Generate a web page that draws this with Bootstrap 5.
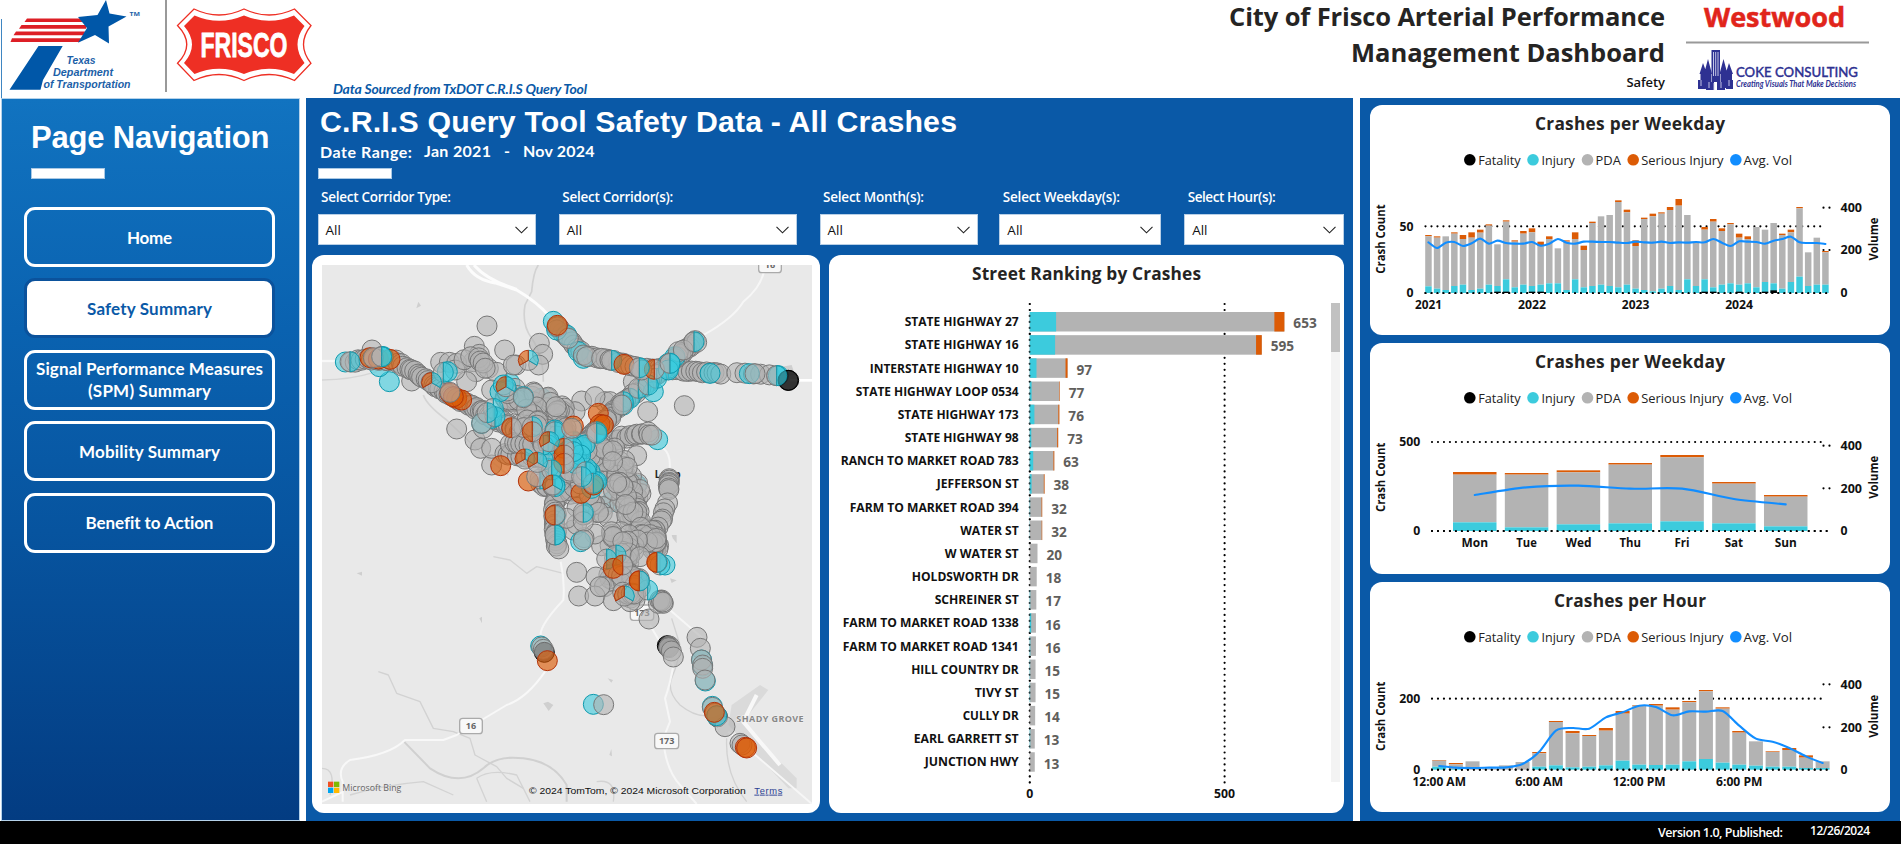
<!DOCTYPE html>
<html lang="en">
<head>
<meta charset="utf-8">
<title>City of Frisco Arterial Performance Management Dashboard</title>
<link href="https://cdn.jsdelivr.net/npm/bootstrap@5.3.0/dist/css/bootstrap.min.css" rel="stylesheet">
<style>
:root{--blue:#0a59a7;--sans:"Open Sans","Noto Sans",sans-serif;--human:Lato,"Open Sans",sans-serif;--arial:"Liberation Sans",Arial,sans-serif}
body{width:1901px;height:844px;overflow:hidden;font-family:var(--sans);background:#fff;color:#000}
svg{display:block}
[data-fit]{display:inline-block;white-space:nowrap}
.topbar{height:98px}
.source-note{width:262px;padding:81px 0 0 13px;font:italic 700 14px/16px var(--human);color:var(--blue)}
.app-title{font:700 25.5px/36px var(--sans);color:#252423;margin-top:-2px}
.app-page{font:600 13px/16px var(--sans);color:#111;padding-top:4px}
.title-block{width:450px;margin-right:21px}
.brands{width:183px;margin-right:32px}
.side{width:299px;margin-left:1px;padding:0 24px 0 22px;background:linear-gradient(#1173c0,#0a62b0 32%,#07549f 60%,#033c82);border:1px solid #b5d2ea}
.side-title{font:700 31px/36px var(--arial);color:#fff;margin:21px 0 0 7px}
.rule-bar{width:74.5px;height:10.5px;background:#fff;border:1px solid #a9c8e4}
.nav-tile{height:60px;border:3px solid #fff;border-radius:11px;color:#fff;font:700 17px/22px var(--human);text-align:center;padding:1px 0 0}
.nav-tile:hover{color:#fff;border-color:#fff;background:#0f6cb9}
.nav-tile.active{background:#fff!important;color:#0a59a7!important;border-color:#0b529c!important}
.main-panel{width:1047px;margin-left:6px;background:var(--blue);padding:0 9px 8px 6px}
.main-title{font:700 30.3px/34px var(--arial);color:#fff}
.date-range{font:700 16px/20px var(--human);color:#fff}
.slicers{padding:0 0 0 5.5px}
.slicer label{font:600 13.5px/18px var(--sans);color:#fff;margin-left:3.5px}
.slicer .box{height:30.5px;background:#fff;border:1px solid #b8cfe6;font:400 13.5px/28px var(--sans);color:#111;padding:1px 7px 0 7px}
.panel-card{background:#fff;border:0;border-radius:12px}
.right-panel{width:540px;margin-left:7px;background:var(--blue);padding:6.6px 10px 8px 10px;gap:8.1px}
.chart-title{font:700 17.3px/24px var(--sans);color:#252423}
.foot{height:23px;background:#000;color:#fff}
.foot div{font-weight:600}
text{font-family:var(--sans)}
.ax{font-weight:700;font-size:12.2px}
</style>
</head>
<body class="d-flex flex-column">
<header class="topbar d-flex flex-shrink-0">
 <svg width="320" height="98" viewBox="0 0 320 98" role="img" aria-label="Texas Department of Transportation and Frisco">
  <path d="M1.5 19V98" stroke="#3f86c2" stroke-width="1"/>
  <g fill="#dd1f26"><path d="M27 18.6H80L84 22H24.500z"/><path d="M21.500 25H87L86 28.700H19z"/><path d="M16 31.600H85L84 35.200H13.500z"/><path d="M12 38.200H82L79 42H10.500z"/></g>
  <path d="M106 0L109.500 13.500L126.500 16.500L108.500 26.500L109 43.500L95 35L78 42.700L87 28L78 17L97.500 15z" fill="#0057a8"/>
  <path d="M38.500 46H62.700L43 80L40.500 89.700H9.500z" fill="#0057a8"/>
  <g fill="#1c5fa8" font-style="italic" font-weight="700" font-size="11.800">
   <text x="66.500" y="64" textLength="29" lengthAdjust="spacingAndGlyphs" style="font-family:var(--arial)">Texas</text>
   <text x="53" y="76" textLength="60" lengthAdjust="spacingAndGlyphs" style="font-family:var(--arial)">Department</text>
   <text x="43.500" y="88" textLength="87" lengthAdjust="spacingAndGlyphs" style="font-family:var(--arial)">of Transportation</text>
  </g>
  <text x="129.500" y="16" font-size="5.500" font-weight="700" fill="#1c5fa8" textLength="10.500" lengthAdjust="spacingAndGlyphs">TM</text>
  <path d="M166 0V92" stroke="#999" stroke-width="2"/>
  <path d="M194 9Q219 21 244 9Q269 21 294.500 9L311 25.500Q296 44.500 311 63.300L294.500 80.500Q269 68.500 244 80.500Q219 68.500 194 80.500L177.500 63.300Q196 44.500 177.500 25.500Z" fill="#fff" stroke="#ee2f24" stroke-width="1.300"/>
  <path d="M194.500 15.500Q219 26 244 15.500Q269 26 294 15.500L304.500 26Q290.500 44.500 304.500 63L294 74Q269 63.500 244 74Q219 63.500 194.500 74L184 63Q200 44.500 184 26Z" fill="#ee2f24"/>
  <text x="200.500" y="57.300" font-size="35.500" font-weight="700" fill="#fff" stroke="#fff" stroke-width=".8" textLength="87" lengthAdjust="spacingAndGlyphs" style="font-family:var(--arial)">FRISCO</text>
 </svg>
 <div class="source-note"><span data-fit="254">Data Sourced from TxDOT C.R.I.S Query Tool</span></div>
 <div class="title-block ms-auto text-end">
  <div class="app-title"><span data-fit="436">City of Frisco Arterial Performance</span><br><span data-fit="314">Management Dashboard</span></div>
  <div class="app-page"><span data-fit="38.500">Safety</span></div>
 </div>
 <svg class="brands" height="98" viewBox="1686 0 183 98" role="img" aria-label="Westwood, Coke Consulting">
  <text x="1704" y="27" font-size="26" font-weight="700" fill="#e1251b" stroke="#e1251b" stroke-width=".5" textLength="141" lengthAdjust="spacingAndGlyphs">Westwood</text>
  <path d="M1686 42.500H1869" stroke="#999" stroke-width="2"/>
  <g fill="#2e3192">
   <rect x="1711.500" y="50" width="8.500" height="32"/>
   <path d="M1703 63l-3.500 11h1v14h5.500V74h1zM1708 59l-4 15h1v14h6V74h1zM1723.500 59l-4 15h1v14h6V74h1zM1729 63l-3.500 11h1v14h5.500V74h1z"/>
   <path d="M1698 80h7l1 9h-8zM1706 82h8v8h-8zM1717 82h8v8h-8zM1726 80h7v9h-7z"/>
   <path d="M1713.500 52v24M1715.700 52v24M1718 52v24M1701 80v6M1709 82v6M1714 83v7M1721 82v6M1729 80v6" stroke="#d5d5ef" stroke-width=".9"/>
   <text x="1736" y="76.500" font-size="13.500" font-weight="500" stroke="#2e3192" stroke-width=".35" textLength="122" lengthAdjust="spacingAndGlyphs" style="font-family:Lato,sans-serif">COKE CONSULTING</text>
   <text x="1736" y="87" font-size="8.500" font-style="italic" font-weight="700" textLength="120" lengthAdjust="spacingAndGlyphs" style="font-family:Lato,sans-serif">Creating Visuals That Make Decisions</text>
  </g>
 </svg>
</header>

<main class="d-flex" style="height:723px">
 <nav class="side d-flex flex-column" aria-label="Page navigation">
  <div class="side-title"><span data-fit="238.500">Page Navigation</span></div>
  <div class="rule-bar" style="margin:12px 0 0 6.500px"></div>
  <div class="d-flex flex-column" style="gap:11.400px;margin-top:28.500px">
   <a class="btn nav-tile d-flex align-items-center justify-content-center"><span data-fit="45">Home</span></a>
   <a class="btn nav-tile active d-flex align-items-center justify-content-center"><span data-fit="125">Safety Summary</span></a>
   <a class="btn nav-tile d-flex align-items-center justify-content-center"><span><span data-fit="227">Signal Performance Measures</span><br><span data-fit="123">(SPM) Summary</span></span></a>
   <a class="btn nav-tile d-flex align-items-center justify-content-center"><span data-fit="141">Mobility Summary</span></a>
   <a class="btn nav-tile d-flex align-items-center justify-content-center"><span data-fit="128">Benefit to Action</span></a>
  </div>
 </nav>

 <section class="main-panel d-flex flex-column">
  <div style="padding:7px 0 0 8px">
   <div class="main-title"><span data-fit="637">C.R.I.S Query Tool Safety Data - All Crashes</span></div>
   <div class="date-range d-flex" style="margin-top:2px"><span data-fit="92" style="margin-top:1px">Date Range:</span><span data-fit="67" style="margin-left:12px">Jan 2021</span><span style="margin-left:13px">-</span><span data-fit="71.500" style="margin-left:13px">Nov 2024</span></div>
  </div>
  <div class="rule-bar flex-shrink-0" style="margin:6px 0 0 5.500px"></div>
  <div class="slicers d-flex" id="slicers" style="margin-top:9.500px"></div>
  <div class="d-flex flex-shrink-0" style="gap:9px;margin-top:10.500px">
   <div class="card panel-card" style="width:508px;height:557.500px;padding:10px 8px 8px 10px">
    <svg id="map" width="490" height="539" viewBox="36 30 1470 1617"></svg>
   </div>
   <div class="card panel-card" style="width:515px;height:557.500px">
    <div class="chart-title text-center" style="padding-top:7px;height:45px"><span data-fit="229">Street Ranking by Crashes</span></div>
    <svg id="street" width="515" height="512" viewBox="829 300 515 512"></svg>
   </div>
  </div>
 </section>

 <section class="right-panel d-flex flex-column" id="right"></section>
</main>
<footer class="foot d-flex flex-shrink-0 justify-content-end" style="padding-right:31px">
 <div style="font-size:12.500px;line-height:23px;margin-right:27px"><span data-fit="125">Version 1.0, Published:</span></div>
 <div style="font-size:12px;line-height:20px"><span data-fit="60">12/26/2024</span></div>
</footer>

<script src="https://cdn.jsdelivr.net/npm/bootstrap@5.3.0/dist/js/bootstrap.bundle.min.js"></script>
<script>
const CY='#3ccbdd',GR='#b3b3b3',OR='#dc5b05',LN='#118dff';
const dots=(d)=>`<path d="${d}" stroke="#000" stroke-width="2.200" stroke-linecap="round" stroke-dasharray="0 5.980" fill="none"/>`;
const rect=(x,y,w,h,f)=>h>0&&w>0?`<rect x="${x}" y="${y}" width="${w}" height="${h}" fill="${f}"/>`:'';
const txt=(x,y,s,w,a='start',c='ax',f='#111')=>`<text class="${c}" x="${x}" y="${y}" text-anchor="${a}" fill="${f}" textLength="${w}" lengthAdjust="spacingAndGlyphs">${s}</text>`;

/* slicers */
const sl=[['Corridor Type',219,22.500,130],['Corridor(s)',238.500,22.500,111],['Month(s)',158.500,21.500,101],['Weekday(s)',162,23,117],['Hour(s)',160,0,88]];
document.getElementById('slicers').innerHTML=sl.map(s=>`<div class="slicer" style="width:${s[1]}px;margin-right:${s[2]}px"><label class="d-block" style="margin-bottom:8px"><span data-fit="${s[3]}">Select ${s[0]}:</span></label><div class="box d-flex justify-content-between align-items-center"><span>All</span><svg width="13" height="8" viewBox="0 0 13 8"><path d="M.5.8L6.500 6.800L12.500.8" fill="none" stroke="#222" stroke-width="1.100"/></svg></div></div>`).join('');

/* street ranking */
const st=[['STATE HIGHWAY 27',653,114,26.400,10],['STATE HIGHWAY 16',595,114,25.400,5.700],['INTERSTATE HIGHWAY 10',97,149,6.800,2],['STATE HIGHWAY LOOP 0534',77,163,1.900,.5],['STATE HIGHWAY 173',76,121,4.700,1],['STATE HIGHWAY 98',73,114,1.600,1],['RANCH TO MARKET ROAD 783',63,178,3.500,.8],['JEFFERSON ST',38,82,1.900,.7],['FARM TO MARKET ROAD 394',32,169,.4,.6],['WATER ST',32,58.500,.2,.5],['W WATER ST',20,74,0,0],['HOLDSWORTH DR',18,107,0,0],['SCHREINER ST',17,84,.5,0],['FARM TO MARKET ROAD 1338',16,176,1.500,0],['FARM TO MARKET ROAD 1341',16,176,.6,0],['HILL COUNTRY DR',15,107.500,.4,0],['TIVY ST',15,44,.4,0],['CULLY DR',14,56,0,0],['EARL GARRETT ST',13,105,.5,0],['JUNCTION HWY',13,94,0,0]];
let s=dots('M1029.800 304V784')+dots('M1224.600 304V784');
st.forEach((r,i)=>{const y=312+i*23.170,w=r[1]*.39;
 s+=rect(1029.700,y,w,19.500,GR)+rect(1029.700,y,r[3],19.500,CY)+rect(1029.700+w-r[4],y,r[4],19.500,OR);
 s+=txt(1018.700,y+14.200,r[0],r[2],'end');
 s+=`<text x="${1029.700+w+9}" y="${y+16.300}" font-size="14" font-weight="700" fill="#605e5c" textLength="${String(r[1]).length*7.800}" lengthAdjust="spacingAndGlyphs">${r[1]}</text>`;});
s+=dots('M1029.800 304V784').replace('#000','#00000066');
s+=txt(1029.700,798,'0',7,'middle')+txt(1224.600,798,'500',21,'middle')+rect(1331,303,9,479,'#f3f3f3')+rect(1331,303,9,49,'#c1c1c1');
document.getElementById('street').innerHTML=s;

/* combo charts; bar rows hold total, gray top, injury top and fatality in thirds of a pixel above y = 0 */
const smooth=p=>{let d=`M${p[0]}`;for(let i=0;i<p.length-1;i++){const a=p[i-1]||p[i],b=p[i],c=p[i+1],e=p[i+2]||c;const k=7;
 d+=`C${b[0]+(c[0]-a[0])/k} ${b[1]+(c[1]-a[1])/k} ${c[0]-(e[0]-b[0])/k} ${c[1]-(e[1]-b[1])/k} ${c[0]} ${c[1]}`}return d};
const charts=[
{t:'Crashes per Weekday',tw:190,oy:95,top:105,z:594,yl:'50',yw:14,ym:394,v:[465,338],x0:1425.200,bw:6.500,p:8.630,lx:1413.600,dx:1425.500,ac:432,
 b:'420,424,574 424,428,581 424,424,585 412,416,573 420,432,569 412,428,585 404,413,581 388,392,569 448,448,573,4 376,380,553,4 436,440,577 408,416,569 400,412,573,4 440,453,569,4 424,432,565 460,460,565 436,440,585 412,432,553 452,465,577 380,384,573 364,364,569 360,360,573 316,321,577 344,352,569 436,453,581 368,372,585 356,364,589 352,356,581 336,345,573 312,332,585 360,360,553 440,440,573 396,404,553,4 372,380,577,4 400,408,569 384,388,565 416,428,569,4 424,432,565 396,396,577 404,404,561,4 384,384,565,8 416,420,581 404,412,561 336,340,545 472,472,573 428,428,569 468,472,569',
 l:[442,459,443,441,453,445,431,446,437,444,446,446,441,452,446,432,443,446,440,440,441,441,443,444,440,442,443,440,444,442,443,441,442,432,443,453,439,440,441,446,437,432,425,442,444,444,447],
 c:[[0,'2021',27],[12,'2022',28],[24,'2023',27.500],[36,'2024',28]],cy:641},
{t:'Crashes per Weekday',tw:190,oy:340,top:343,z:573,yl:'500',yw:21,ym:306,v:[445,317],x0:1453,bw:43.500,p:51.830,lx:1420.300,dx:1432,ac:412,
 b:'396,404,547 399,404,562 391,397,553 369,374,550 345,352,544 426,431,550 465,470,559',l:[465,442,437,446,446,477,493],
 c:[[0,'Mon',26.500],[1,'Tue',20.500],[2,'Wed',26],[3,'Thu',21.500],[4,'Fri',15],[5,'Sat',18.500],[6,'Sun',22]],cy:620},
{t:'Crashes per Hour',tw:152,oy:575,top:582,z:584,yl:'200',yw:21,ym:371,v:[457,328],x0:1432.200,bw:14,p:16.670,lx:1420.300,dx:1432,ac:424,
 b:'555,557,575 564,568,582 559,559,584 581,581,584 571,571,584 561,561,584 531,535,575 438,441,571 468,475,577 480,483,575 459,467,571 408,416,557 390,392,569 387,392,570 397,404,569 378,382,559 345,349,552 397,401,563 468,473,569 499,499,572 529,531,575 519,525,575 541,548,579 559,559,579',
 l:[573,578,579,578,577,567,530,467,459,461,427,412,392,396,421,409,410,408,452,491,500,519,544,564],
 c:[[0,'12:00 AM',53.500],[6,'6:00 AM',48],[12,'12:00 PM',53],[18,'6:00 PM',46.500]],cy:632}];
const leg=[['Fatality',1469.800,1478.200,42.500,'#000'],['Injury',1533,1541.500,33.400,CY],['PDA',1587.500,1595.600,25.300,GR],['Serious Injury',1633.200,1641.300,82.200,OR],['Avg. Vol',1735.800,1743.500,48.500,LN]];
document.getElementById('right').innerHTML=charts.map(c=>{
 const Y=v=>c.oy+v/3;let g='';
 leg.forEach(q=>g+=`<circle cx="${q[1]}" cy="${c.top+54.800}" r="5.800" fill="${q[4]}"/><text x="${q[2]}" y="${c.top+60}" font-size="13.500" fill="#222" textLength="${q[3]}" lengthAdjust="spacingAndGlyphs">${q[0]}</text>`);
 g+=dots(`M${c.dx} ${Y(c.ym)}H1826`)+dots(`M${c.dx} ${Y(c.z)}H1831`);
 c.v.forEach(v=>g+=dots(`M1823.500 ${Y(v)}H1830`));
 c.b.split(' ').forEach((r,i)=>{const [a,b,d,k]=r.split(',').map(Number),x=c.x0+i*c.p;
  g+=rect(x,Y(a),c.bw,(b-a)/3,OR)+rect(x,Y(b),c.bw,(d-b)/3,GR)+rect(x,Y(d),c.bw,(c.z-d)/3,CY)+(k?rect(x,Y(c.z-k),c.bw,k/3,'#000'):'')});
 g+=dots(`M${c.dx} ${Y(c.z)}H1831`);
 g+=`<path d="${smooth(c.l.map((v,i)=>[c.x0+i*c.p+c.bw/2,Y(v)]))}" fill="none" stroke="${LN}" stroke-width="2.100" stroke-linecap="round"/>`;
 g+=txt(c.lx,Y(c.ym)+4.300,c.yl,c.yw,'end')+txt(c.lx,Y(c.z)+4.300,'0',7,'end');
 ['200','400'].forEach((n,i)=>g+=txt(1840.500,Y(c.v[i])+4.300,n,21.500));g+=txt(1840.500,Y(c.z)+4.300,'0',7);
 c.c.forEach(q=>g+=txt(c.x0+c.bw/2+q[0]*c.p,Y(c.cy),q[1],q[2],'middle'));
 g+=`<g transform="translate(1385 ${Y(c.ac)}) rotate(-90)">${txt(0,0,'Crash Count',69.500,'middle')}</g><g transform="translate(1878 ${Y(c.ac)}) rotate(-90)">${txt(0,0,'Volume',43,'middle')}</g>`;
 return `<div class="card panel-card flex-shrink-0" style="height:230.500px"><div class="chart-title text-center" style="padding-top:7px;height:40px"><span data-fit="${c.tw}">${c.t}</span></div><svg width="520" height="190" viewBox="1370 ${c.top+40} 520 190">${g}</svg></div>`}).join('');

/* crash map, three units to the pixel */
let m='<rect x="36" y="30" width="1470" height="1617" fill="#e9e9e9"/>';
const road=(d,w,c)=>{m+=`<path d="${d}" fill="none" stroke="${c}" stroke-width="${w}" stroke-linejoin="round"/>`};
m+='<path d="M1265 1350l85-60 25 15-80 100 165 165v30h-25l-180-190z" fill="#dadada"/><path d="M325 140l8 12-14 8zM1085 840l15 0v25l-12-15zM700 1345l14-5 16 10-14 18zM1080 970l20 6-15 8zM1390 340l55-10 10 30-60 5zM893 1270l16 5-5 8zM140 955l16-5v12zM508 1090l8-5v20zM898 1500l6-18 2 22z" fill="#cfcfcf"/>';
road('M685 30Q670 50 665 110L645 150Q635 210 665 250Q700 300 700 380',5,'#d2d2d2');
road('M340 420Q350 450 410 495L520 600L595 660',5,'#d4d4d4');
road('M36 375Q120 375 200 350',4,'#d6d6d6');
road('M550 905L600 915L650 955L680 935L760 955',4,'#d4d4d4');
road('M205 1250L235 1260L260 1315L330 1340L370 1420L430 1430L480 1450L495 1500L560 1535L590 1570L640 1600',4,'#d2d2d2');
road('M282 1460L360 1540Q450 1600 520 1540Q560 1500 640 1510Q730 1520 770 1590L770 1640',6,'#d0d0d0');
road('M36 1540Q80 1540 60 1620M120 1620Q220 1590 340 1580L430 1620M500 1570Q540 1540 620 1560L660 1640M500 1570L530 1640M860 1580Q920 1570 910 1640',4,'#d3d3d3');
road('M1085 1090L1110 1170Q1110 1210 1085 1270Q1070 1310 1110 1350Q1160 1390 1200 1380M1250 1450Q1245 1560 1310 1640',4,'#d2d2d2');
road('M36 318H90',7,'#f8f8f8');road('M1440 376H1506',8,'#fff');
road('M470 30Q495 75 560 85L620 105Q680 140 720 185M492 30Q530 75 620 103',9,'#fcfcfc');
road('M1362 50Q1350 100 1300 140Q1270 190 1180 240',6,'#f6f6f6');
road('M1060 580Q1085 600 1078 650M752 920Q765 980 760 1035Q690 1110 692 1140',6,'#f6f6f6');
road('M705 1250Q650 1330 590 1350L440 1440L400 1455H285Q240 1500 120 1515Q80 1540 98 1580V1640M36 1640L100 1610',6,'#f8f8f8');
road('M1080 1065L1190 1160M1020 1110L1090 1230Q1080 1290 1065 1330L1080 1400L1060 1450Q1065 1540 1110 1590L1160 1647M1255 1430L1506 1647',6,'#f6f6f6');
road('M1340 1320L1300 1400L1350 1460L1410 1530',12,'#f8f8f8');
const sh=(x,y,t,w=68)=>{m+=`<rect x="${x-w/2}" y="${y-23}" width="${w}" height="46" rx="9" fill="#f8f8f8" stroke="#aaa" stroke-width="4"/><text x="${x}" y="${y+10}" font-size="27" font-weight="700" fill="#666" text-anchor="middle">${t}</text>`};
sh(1380,30,'16');sh(483,1413,'16');sh(1070,1458,'173',72);sh(996,1073,'173',70);
m+='<text x="1034" y="668" font-size="29" font-weight="700" fill="#222" textLength="78">Loop</text>';
const F={g:GR,c:'#3ccbdd',o:OR,k:'#111'},S={g:'#777',c:'#0e99ad',o:'#b33208',k:'#000'};
const R=30,sec=(x,y,a,b,t)=>{const r=Math.PI/180,p=q=>`${(x+R*Math.sin(q*r)).toFixed(1)} ${(y-R*Math.cos(q*r)).toFixed(1)}`;return `<path d="M${x} ${y}L${p(a)}A${R} ${R} 0 ${b-a>180?1:0} 1 ${p(b)}Z" fill="${F[t]}" fill-opacity=".62" stroke="${S[t]}" stroke-width="2.800"/>`};
const dot=(t,x,y)=>{
 if(t=='h')m+=sec(x,y,180,360,'g')+sec(x,y,0,180,'c');
 else if(t=='q')m+=sec(x,y,0,180,'g')+sec(x,y,180,360,'o');
 else if(t=='r')m+=sec(x,y,0,180,'c')+sec(x,y,180,360,'o');
 else if(t=='t')m+=sec(x,y,120,240,'g')+sec(x,y,0,120,'c')+sec(x,y,240,360,'o');
 else m+=`<circle cx="${x.toFixed(1)}" cy="${y.toFixed(1)}" r="${R}" fill="${F[t]}" fill-opacity="${t=='o'?.64:.6}" stroke="${S[t]}" stroke-width="3"/>`};
let seed=11;const rnd=()=>(seed=(seed*16807)%2147483647)/2147483647;
const run=(pts,step,j=3,t='g')=>{for(let i=0;i<pts.length-1;i++){const [a,b]=pts[i],[c,d]=pts[i+1],n=Math.max(1,Math.round(Math.hypot(c-a,d-b)/step));for(let k=0;k<n;k++)dot(t,a+(c-a)*k/n+(rnd()-.5)*j*2,b+(d-b)*k/n+(rnd()-.5)*j*2)}};
const list=(t,str)=>str.split(' ').forEach(q=>{const [x,y]=q.split(',').map(Number);dot(t,x,y)});
/* outlying crashes */
list('c','238,380 208,335 106,321 1043,554 980,690 600,385 695,430 905,740 1065,930');
list('g','531,213 584,285 688,265 698,298 686,330 493,274 508,298 490,320 186,285 305,378 498,350 535,340 560,352 470,380 392,322 418,322 440,325 435,345 618,330 440,522 495,555 512,580 520,520 545,630 545,580 1013,470 1123,452 815,438 795,470 885,440 900,440 970,380 983,685 980,602 855,425 545,405');
run([[470,315],[500,310],[540,345]],14,8);
/* corridors */
run([[125,322],[165,312],[255,318],[330,360],[400,410],[480,450],[560,495],[640,535],[740,590]],10,3);
run([[480,450],[640,535]],8,5);
run([[740,215],[775,250],[820,300],[900,315],[1000,340],[1100,345]],13,2);
run([[1100,345],[1245,357]],11,2);run([[1280,355],[1330,355],[1400,360]],22,2);
run([[1155,260],[1085,320],[1000,395],[930,450],[850,540],[780,610]],12,4);
run([[905,480],[820,570]],9,4);
run([[580,600],[660,605],[760,610]],14,5);
run([[600,565],[680,570]],12,3);
run([[690,690],[740,700],[735,760],[735,830],[745,895]],9,5);
run([[880,580],[930,550],[980,535],[1020,535],[1040,550]],11,6);
run([[1077,670],[1075,710]],6,2);run([[1072,745],[1062,775],[1045,815],[1020,840]],15,4);
/* downtown */
const blob=(pts,n,w)=>{for(let i=0;i<n;i++){const u=rnd()*(pts.length-1),k=Math.floor(u),f=u-k;dot('g',pts[k][0]+(pts[k+1][0]-pts[k][0])*f+(rnd()-.5)*w*2,pts[k][1]+(pts[k+1][1]-pts[k][1])*f+(rnd()-.5)*w*2)}};
blob([[570,430],[630,420],[700,440],[770,500]],40,28);
blob([[640,480],[740,540],[790,600]],40,45);
blob([[800,600],[880,590],[930,650],[960,720]],76,34);
blob([[740,600],[780,680],[820,740],[870,760]],48,36);
blob([[920,690],[965,760],[975,810],[1030,850]],46,20);
blob([[1000,850],[1035,850],[1040,890]],34,12);
blob([[890,850],[960,860],[940,930],[920,980]],44,26);
blob([[900,970],[980,980],[950,1020]],22,16);
list('g','855,837 790,825 822,848 800,808 800,952 858,966 883,995 806,1023 855,1023 910,1037 975,1035 1017,1092 960,1040 1055,1035 1045,1045 1060,1045 770,790 870,995 820,780 820,800');
run([[940,1010],[985,1025]],12,4);run([[1050,1035],[1062,1045]],6,1);
/* injuries */
list('c','730,199 770,240 740,225 805,290 820,310 1200,355 1318,356 220,305 412,350 570,410 580,390 545,490 515,505 640,425 735,525 1075,325 1095,305 1030,410 812,860');
list('g','742,215 775,250 820,300 830,305 875,310 900,315 1150,262 1160,262 1335,356 640,428 515,505 610,330 820,855 1105,290 1120,285 990,905 1080,1035'.replace(' 1080,1035',''));
list('h','120,320 215,305 905,316 1152,260 988,340 1075,340 1400,362 400,352 550,460 555,485 532,473 667,515 735,530 712,560 715,570 960,430 985,400 1040,370 1015,390 940,450 1080,325 860,530 855,533 790,580 810,590 780,610 812,590 820,650 830,665 855,680 820,660 715,640 690,672 735,690 820,772 735,782 735,840 700,615 735,840 918,900 890,912 1013,1005 1050,930 815,580 850,690 840,650 790,560');
list('c','815,575 770,590 800,610 830,640 860,680 845,700 1075,345 825,570');
list('o','180,308 205,312 240,313 420,415 440,430 455,435 742,211 942,328 865,475 790,513 870,508 880,510 572,632 655,678 813,715 850,690 910,940 430,425');
list('h','215,305 940,440 860,530 820,670 735,695 700,570 860,535');
list('c','785,575 812,600 795,625');
list('h','828,650 850,685 790,590 815,665');
list('g','190,308 420,412 785,520 680,665 760,620 995,345 935,450');
list('q','605,518 667,530 762,580 762,600 762,625 1033,343 735,780 938,930 1042,922 988,977');
list('h','988,338 725,645 1080,325 215,305');
list('t','655,316 588,395 365,383 645,612 682,622 718,560 728,690 943,1023');
list('r','1040,922 988,978');
/* south */
list('c','692,1173 850,1348');list('g','695,1176');list('k','703,1192');list('g','700,1183');list('o','712,1217');list('g','881,1349');
list('k','1072,1172 1074,1175');list('g','1078,1173 1076,1178 1084,1188 1090,1206 1161,1147 1171,1180');
list('c','1175,1215 1178,1233 1186,1278');list('g','1174,1215 1178,1230 1178,1240 1185,1275');
list('c','1207,1354');list('k','1222,1385');list('g','1207,1357 1222,1385 1215,1375 1245,1415 1290,1465 1296,1470');list('c','1220,1382');list('o','1213,1372');list('o','1306,1477 1310,1479');
list('c','1405,362');list('k','1434,376');list('k','1436,376');list('h','1400,362');
m+='<text x="1279" y="1400" font-size="27" font-weight="700" fill="#888" stroke="#f2f2f2" stroke-width="3" paint-order="stroke" textLength="202">SHADY GROVE</text>';
m+=rect(54,1580,16,16,'#f25022')+rect(72,1580,16,16,'#7fba00')+rect(54,1598,16,16,'#00a4ef')+rect(72,1598,16,16,'#ffb900');
m+='<text x="97" y="1607" font-size="27" fill="#666" textLength="177" lengthAdjust="spacingAndGlyphs">Microsoft Bing</text><text x="657" y="1616" font-size="28" fill="#111" textLength="650" lengthAdjust="spacingAndGlyphs" style="font-family:var(--arial)">© 2024 TomTom, © 2024 Microsoft Corporation</text><text x="1333" y="1616" font-size="28" fill="#2b3e92" textLength="84" text-decoration="underline" style="font-family:var(--arial)">Terms</text>';
document.getElementById('map').innerHTML=m;

/* spread each label over its column width */
document.querySelectorAll('[data-fit]').forEach(e=>{const n=e.textContent.length,w=e.getBoundingClientRect().width,d=(+e.dataset.fit-w)/(n-1);e.style.letterSpacing=d.toFixed(3)+'px';e.style.marginRight=(-d).toFixed(3)+'px'});
</script>
</body>
</html>
